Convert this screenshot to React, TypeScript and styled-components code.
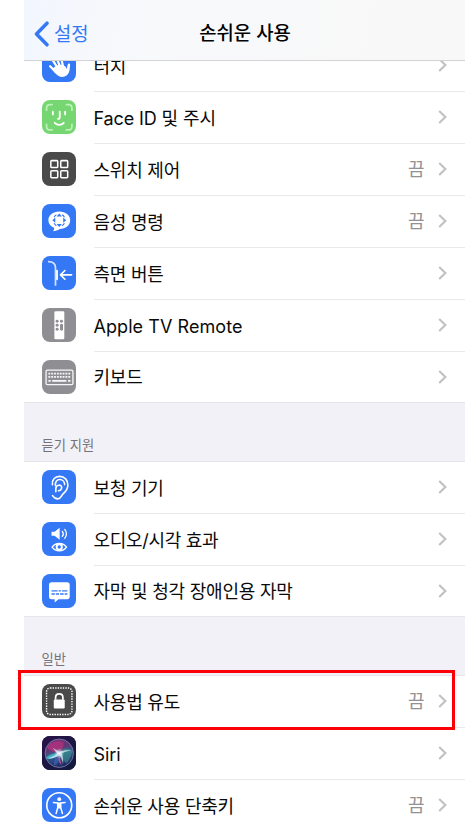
import React from "react";
import styled, { createGlobalStyle } from "styled-components";

const GlobalStyle = createGlobalStyle`
  html, body { margin: 0; padding: 0; background: #fff; overflow: hidden; }
  * { box-sizing: border-box; }
`;

const Page = styled.div`
  position: relative;
  width: 465px;
  height: 822px;
  padding-left: 24px;
  overflow: hidden;
  background: #fff;
  color: #0a0a0a;
  font-family: Inter, "Noto Sans CJK KR", sans-serif;
`;

const Header = styled.header`
  position: relative;
  z-index: 1;
  display: grid;
  grid-template-columns: 1fr auto 1fr;
  align-items: center;
  height: 61px;
  padding: 7px 0 0 10px;
  border-bottom: 1px solid #d3d3d6;
  background: linear-gradient(100deg, #f2f6fe 0%, #f8f9fb 28%, #f8f8f8 100%);
`;

const Back = styled.div`
  display: flex;
  align-items: center;
  gap: 5px;
  color: #3478f6;
  font-size: 18.8px;
  span { margin-top: -2px; }
`;

const Title = styled.h1`
  margin: 0 0 0 -9px;
  font-size: 18.8px;
  line-height: 28px;
  font-weight: 500;
  color: #000;
`;

const List = styled.main`
  margin-top: -21.5px;
`;

const Row = styled.div<{ $last?: boolean }>`
  display: flex;
  height: ${(p) => (p.$last ? 50.5 : 52)}px;
  padding-left: 17.5px;
`;

const IconTile = styled.div<{ $bg: string }>`
  flex: none;
  width: 34.5px;
  height: 34.5px;
  margin-top: 8.3px;
  border-radius: 8px;
  overflow: hidden;
  background: ${(p) => p.$bg};
  svg { display: block; width: 100%; height: 100%; }
`;

const Content = styled.div<{ $last?: boolean }>`
  flex: 1;
  display: flex;
  align-items: center;
  margin-left: 17.5px;
  padding: 0 18.5px 0 0;
  border-bottom: ${(p) => (p.$last ? "none" : "1px solid #e9e9eb")};
`;

const Label = styled.span<{ $track: number }>`
  flex: 1;
  padding-top: 3px;
  font-size: 18px;
  line-height: 26px;
  white-space: nowrap;
  letter-spacing: ${(p) => p.$track}px;
`;

const Value = styled.span`
  margin-right: 13px;
  padding-top: 2px;
  color: #929295;
  font-size: 18px;
  line-height: 26px;
`;

const SectionHeader = styled.h2`
  display: flex;
  align-items: flex-end;
  height: 59.5px;
  margin: 0;
  padding: 0 0 6px 17.5px;
  border-top: 1px solid #e6e6ea;
  border-bottom: 1px solid #e6e6ea;
  background: #f2f1f7;
  color: #747478;
  font-size: 13.3px;
  line-height: 20px;
  font-weight: 400;
`;

const Highlight = styled.div`
  position: absolute;
  left: 18px;
  top: 670px;
  width: 437px;
  height: 60px;
  border: 3px solid #fb0007;
`;

const Chevron = () => (
  <svg width="9" height="14" viewBox="0 0 9 14" fill="none" stroke="#c1c1c4" strokeWidth="2.1">
    <path d="M1.2 1 7.4 7l-6.2 6" />
  </svg>
);

const HandIcon = () => (
  <svg viewBox="0 0 34 34" fill="none" stroke="#fff" strokeWidth="2.2" strokeLinecap="round">
    <path d="m8 18 5.500 5.500M10.300 11.500l5 8M14.300 9.500l3.500 9M18.800 9.500l2 9" />
    <path d="M11.500 19.500c3.500-3.500 8-4 11.300-1.500.7.8 1.200 1.800 1.500 3l1-4.500c.7-2 2.700-1.500 2.400.5-.4 4.500-.6 9.500-5.500 11.200-5.500 1.800-9.700-3.500-12.500-7.700z" fill="#fff" stroke="none" />
  </svg>
);

const FaceIcon = () => (
  <svg viewBox="0 0 34 34" fill="none" strokeLinecap="round">
    <path d="M4.500 10V8c0-2.500 1-3.500 3.500-3.500h2M24 4.500h2c2.500 0 3.500 1 3.500 3.500v2M29.500 24v2c0 2.500-1 3.500-3.500 3.500h-2M10 29.500H8c-2.500 0-3.500-1-3.500-3.500v-2" stroke="#bdf0b8" strokeWidth="1.700" />
    <path d="M10.700 11.500v2.700M22.800 11.500v2.700M17.500 11.500v5.500c0 1.300-.6 1.600-1.800 1.600M12.500 22.500c2.500 2.600 6.500 2.600 9 0" stroke="#fff" strokeWidth="1.800" />
  </svg>
);

const SwitchIcon = () => (
  <svg viewBox="0 0 34 34" fill="none" stroke="#fff" strokeWidth="1.500">
    <rect x="8.700" y="8.500" width="6.800" height="6.800" rx=".8" />
    <rect x="18.500" y="8.500" width="6.800" height="6.800" rx=".8" />
    <rect x="8.700" y="18.500" width="6.800" height="6.800" rx=".8" />
    <rect x="18.500" y="18.500" width="6.800" height="6.800" rx=".8" />
  </svg>
);

const VoiceIcon = () => (
  <svg viewBox="0 0 34 34">
    <path d="M17 7.500c6.300 0 10.800 3.600 10.800 8.500S23.300 24.600 17.500 24.600c-2 1.300-4.300 2.200-6.700 2.300 1-1 1.300-2.200 1.100-3.400C8.400 22 6.300 19.400 6.300 16c0-4.900 4.500-8.500 10.700-8.500z" fill="#fff" />
    <path d="m17 9.300 2.600 2.900h-5.200zM17 22.700l2.600-2.900h-5.200zM10.200 16l2.900-2.600v5.200zM23.800 16l-2.900-2.600v5.200z" fill="#3478f6" />
    <path d="M11.900 13c.6-1.200 1.300-2 2.300-2.400M19.800 10.600c1 .5 1.800 1.300 2.300 2.400M22.100 19c-.6 1.100-1.300 1.900-2.300 2.400M14.200 21.400c-1-.5-1.700-1.300-2.300-2.400" stroke="#3478f6" strokeWidth="1.100" fill="none" />
  </svg>
);

const SideButtonIcon = () => (
  <svg viewBox="0 0 34 34" fill="none" stroke="#fff" strokeLinecap="round" strokeLinejoin="round">
    <path d="M6 5.600c5.200 0 7.300 1.700 7.300 6.200v17.600" stroke="#d3e2ff" strokeWidth="1.700" strokeLinecap="butt" />
    <path d="M14.800 14.500v8.500" strokeWidth="1.800" />
    <path d="M29.200 18.600H18.600M22.600 14.300l-4.400 4.300 4.400 4.300" strokeWidth="1.600" />
  </svg>
);

const RemoteIcon = () => (
  <svg viewBox="0 0 34 34">
    <rect x="12.200" y="3.200" width="9.800" height="27.600" rx="1.300" fill="#fff" />
    <g fill="#8e8e93">
      <circle cx="14.900" cy="13" r="1.450" /><circle cx="19.200" cy="13" r="1.450" />
      <circle cx="14.900" cy="17" r="1.450" /><circle cx="14.900" cy="21" r="1.450" />
      <rect x="17.800" y="15.500" width="2.900" height="7" rx="1.450" />
    </g>
  </svg>
);

const KeyboardIcon = () => (
  <svg viewBox="0 0 34 34" fill="none" stroke="#f7f7f7">
    <rect x="4" y="10" width="26.500" height="14.300" rx="1.300" strokeWidth="1.300" />
    <path d="M6.300 13.400h22M6.300 16.600h22" strokeWidth="1.900" strokeDasharray="1.850 .95" />
    <path d="M6.300 20.500h2.300M10 20.500h14M25.600 20.500H28" strokeWidth="1.800" />
  </svg>
);

const EarIcon = () => (
  <svg viewBox="0 0 34 34" fill="none" stroke="#fff" strokeWidth="1.600" strokeLinecap="round">
    <path d="M10.300 14.500C9.500 9.800 12.700 6.300 17.300 6.300c5 0 8.200 3.700 8.200 8.500 0 4.600-2.600 6.700-4.700 8.700-2 1.800-2.100 5-5.200 5-2.300 0-3.900-1.200-5.200-3.200" />
    <path d="M13.200 15.300c-.4-3.600 1.500-5.900 4.200-5.900 2.800 0 4.900 2.200 4.900 5" />
    <path d="M13.600 21.400v-3c0-4 5.800-4.600 5.800-1.300 0 2.200-1.700 3.500-3.200 3.400" />
  </svg>
);

const AudioVisualIcon = () => (
  <svg viewBox="0 0 34 34" fill="none" stroke="#fff" strokeLinecap="round">
    <path d="M9.400 9.600h3l5-4v12l-5-4h-3z" fill="#fff" stroke="none" />
    <path d="M20 9.200c1.200 1.500 1.200 3.500 0 5M22.400 7.300c2.200 2.500 2.200 6.300 0 8.800" strokeWidth="1.300" />
    <path d="M10 24.700c3.400-4.700 10.700-4.700 14.100 0-3.400 4.800-10.700 4.800-14.100 0z" strokeWidth="1.400" />
    <circle cx="17" cy="24.600" r="2.600" strokeWidth="1.900" />
  </svg>
);

const CaptionIcon = () => (
  <svg viewBox="0 0 34 34">
    <path d="M9.500 8.200h15.200c1.800 0 2.600.8 2.600 2.600v11.400c0 1.800-.8 2.600-2.600 2.600h-8.400L12.500 28v-3.200h-3c-1.800 0-2.600-.8-2.600-2.600V10.800c0-1.800.8-2.600 2.600-2.600z" fill="#fff" />
    <path d="M9.400 16.700h6M16.400 16.700h2.200M19.600 16.700h5.400M9.400 19.700h3.200M13.600 19.700h3.200M17.800 19.700h3.500M22.300 19.700H25" stroke="#3478f6" strokeWidth="1.300" />
  </svg>
);

const LockIcon = () => (
  <svg viewBox="0 0 34 34" fill="none" stroke="#fff">
    <rect x="4.500" y="4" width="25" height="26" rx="3.500" strokeWidth="1.400" strokeDasharray="1.350 1.150" />
    <rect x="11.600" y="15.200" width="10.800" height="9" rx="1" fill="#fff" stroke="none" />
    <path d="M13.400 15.500v-2.300c0-4.600 7.200-4.600 7.200 0v2.300" strokeWidth="1.700" />
  </svg>
);

const SiriIcon = () => (
  <svg viewBox="0 0 34 34" fill="none">
    <defs>
      <linearGradient id="siriBase" x1="0" y1="0" x2="1" y2="1">
        <stop offset="0" stopColor="#2a1148" /><stop offset="1" stopColor="#101c3d" />
      </linearGradient>
      <linearGradient id="siriOrb" x1="0" y1="0" x2=".3" y2="1">
        <stop offset="0" stopColor="#7d2b78" /><stop offset=".42" stopColor="#623775" /><stop offset=".6" stopColor="#345f8b" /><stop offset="1" stopColor="#202e68" />
      </linearGradient>
      <radialGradient id="siriGlow">
        <stop offset="0" stopColor="#fff" /><stop offset=".4" stopColor="#e8edff" stopOpacity=".6" /><stop offset="1" stopColor="#d8edff" stopOpacity="0" />
      </radialGradient>
    </defs>
    <rect width="34" height="34" fill="url(#siriBase)" />
    <circle cx="17" cy="17" r="14" fill="url(#siriOrb)" stroke="#777aa8" strokeWidth=".9" />
    <path d="M17 17C10 16 6 13 5 11c4-6 11-7 16-5 1 4-1 8-4 11z" fill="#c8327f" fillOpacity=".6" />
    <path d="M17 17c4-6 8-6 13-2-1 5-3 9-6 12-3-3-5-6-7-10z" fill="#3da391" fillOpacity=".5" />
    <path d="M16 17c-6 0-11 2-12 5 5 2 9-1 12-5z" fill="#43c9d4" fillOpacity=".75" />
    <path d="M17 18c-4 2-6 6-5 11 4-1 6-6 5-11z" fill="#4168c4" fillOpacity=".6" />
    <path d="M17 17c1 4 1 8 2.500 12-3.500-3-4-7-2.500-12z" fill="#d55a9b" fillOpacity=".8" />
    <path d="M5 22c4.500-1 7.500-2.700 10-4.700L10.500 11.500l6.500 4c4-1.500 7.500-1.900 12-1.300-4.500.6-7.500 1.500-9.700 3.100 1.500 3 1.900 6.500 1.400 10.100-1-4-2-6.600-3.600-8.500-3 2.100-6.300 3.600-12.100 3.100z" fill="#e2f6fb" fillOpacity=".72" />
    <circle cx="17" cy="17" r="5" fill="url(#siriGlow)" />
  </svg>
);

const AccessibilityIcon = () => (
  <svg viewBox="0 0 34 34" fill="none" stroke="#fff" strokeLinecap="round" strokeLinejoin="round">
    <circle cx="17" cy="17" r="12.300" strokeWidth="1.600" />
    <circle cx="17" cy="11" r="1.900" fill="#fff" stroke="none" />
    <path d="m11.200 14.200 4.300.7v4.600l-1.600 5.500M22.800 14.200l-4.300.7v4.600l1.600 5.500" strokeWidth="1.500" />
    <path d="M15.300 14.300h3.400v5.800h-3.400z" fill="#fff" stroke="none" />
  </svg>
);

type Item = { label: string; bg: string; icon: React.ReactNode; off?: boolean; track?: number };

const BLUE = "#3478f6";
const DARK = "#4a4a4a";
const GRAY = "#8e8e93";

const groups: { title?: string; items: Item[] }[] = [
  {
    items: [
      { label: "터치", bg: BLUE, icon: <HandIcon /> },
      { label: "Face ID 및 주시", bg: "#76d672", icon: <FaceIcon />, track: -0.12 },
      { label: "스위치 제어", bg: DARK, icon: <SwitchIcon />, off: true },
      { label: "음성 명령", bg: BLUE, icon: <VoiceIcon />, off: true },
      { label: "측면 버튼", bg: BLUE, icon: <SideButtonIcon /> },
      { label: "Apple TV Remote", bg: GRAY, icon: <RemoteIcon />, track: 0.06 },
      { label: "키보드", bg: GRAY, icon: <KeyboardIcon /> },
    ],
  },
  {
    title: "듣기 지원",
    items: [
      { label: "보청 기기", bg: BLUE, icon: <EarIcon /> },
      { label: "오디오/시각 효과", bg: BLUE, icon: <AudioVisualIcon />, track: -0.3 },
      { label: "자막 및 청각 장애인용 자막", bg: BLUE, icon: <CaptionIcon /> },
    ],
  },
  {
    title: "일반",
    items: [
      { label: "사용법 유도", bg: DARK, icon: <LockIcon />, off: true },
      { label: "Siri", bg: "#1b1740", icon: <SiriIcon />, track: -0.05 },
      { label: "손쉬운 사용 단축키", bg: BLUE, icon: <AccessibilityIcon />, off: true },
    ],
  },
];

export default function App() {
  return (
    <Page lang="ko">
      <GlobalStyle />
      <Header>
        <Back>
          <svg width="15" height="26" viewBox="0 0 15 26" fill="none" stroke="#3478f6" strokeWidth="3.500" strokeLinecap="round" strokeLinejoin="round">
            <path d="M13 2.200 2.500 13 13 23.800" />
          </svg>
          <span>설정</span>
        </Back>
        <Title>손쉬운 사용</Title>
      </Header>
      <List>
        {groups.map((group, g) => (
          <React.Fragment key={g}>
            {group.title && <SectionHeader>{group.title}</SectionHeader>}
            {group.items.map((item, i) => {
              const last = g < 2 && i === group.items.length - 1;
              return (
                <Row key={item.label} $last={last}>
                  <IconTile $bg={item.bg}>{item.icon}</IconTile>
                  <Content $last={last}>
                    <Label $track={item.track ?? -0.22}>{item.label}</Label>
                    {item.off && <Value>끔</Value>}
                    <Chevron />
                  </Content>
                </Row>
              );
            })}
          </React.Fragment>
        ))}
      </List>
      <Highlight />
    </Page>
  );
}
